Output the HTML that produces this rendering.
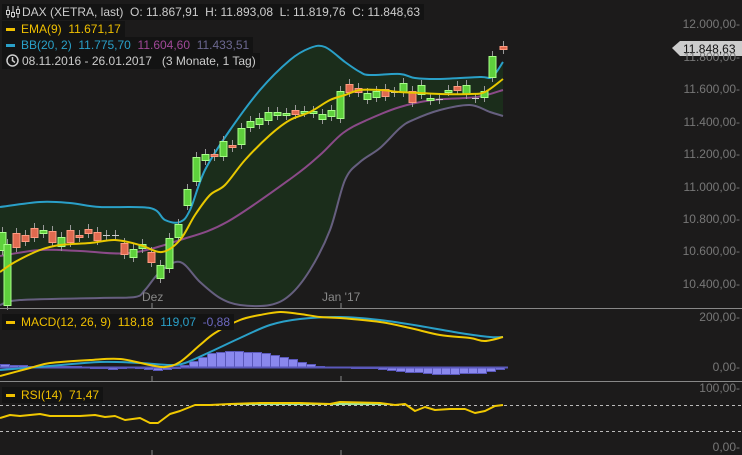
<!DOCTYPE html><html><head><meta charset="utf-8"><style>
body{margin:0;background:#1c1b1b;width:742px;height:455px;overflow:hidden;font-family:"Liberation Sans",sans-serif;}
.lg{position:absolute;left:2px;background:#131313;font-size:12px;color:#ccc;padding:0 4px;height:16px;line-height:16px;white-space:nowrap}
.ax{position:absolute;right:2px;font-size:12px;color:#777;text-align:right}
</style></head><body>
<svg width="742" height="455" style="position:absolute;left:0;top:0">
<path id="band" fill="#1b2d1b"/>
<g fill="none" stroke-width="2" stroke-linejoin="round">
<path id="ub" stroke="#2aa0c8"/>
<path id="lb" stroke="#665f7f"/>
<path id="mb" stroke="#8a4a88"/>
</g>
<g id="c" stroke-width="1"></g>
<path id="ema" fill="none" stroke="#e8c800" stroke-width="2"/>
<line x1="0" y1="308.5" x2="742" y2="308.5" stroke="#888"/>
<line x1="0" y1="381.5" x2="742" y2="381.5" stroke="#888"/>
<g stroke="#888"><line x1="152" y1="303" x2="152" y2="308"/><line x1="341" y1="303" x2="341" y2="308"/><line x1="152" y1="376" x2="152" y2="381"/><line x1="341" y1="376" x2="341" y2="381"/><line x1="152" y1="450" x2="152" y2="455"/><line x1="341" y1="450" x2="341" y2="455"/></g>
<g id="h" fill="#8a88ee" stroke="#5a58bb"></g>
<line x1="0" y1="367.5" x2="508" y2="367.5" stroke="#5a58bb" stroke-width="2"/>
<path id="sig" fill="none" stroke="#2aa0c8" stroke-width="2"/>
<path id="macd" fill="none" stroke="#f0c800" stroke-width="2"/>
<line x1="0" y1="405.5" x2="742" y2="405.5" stroke="#bbb" stroke-dasharray="3,3"/>
<line x1="0" y1="431.5" x2="742" y2="431.5" stroke="#bbb" stroke-dasharray="3,3"/>
<polygon fill="#9ce89c" points="195,405 210,405 230,404 260,403 300,403 330,404 340,402 380,403 395,405"/>
<polyline fill="none" stroke="#f0c800" stroke-width="2" stroke-linejoin="round" points="0,418 10,415 20,416 40,414 50,416 80,416 95,415 105,417 115,416 125,420 140,418 150,423 158,423 170,414 180,411 195,405 210,405 230,404 260,403 280,403 300,403 330,404 340,402 380,403 395,405 405,404 415,411 425,407 435,410 450,409 465,409 475,413 485,411 495,406 503,405"/>
<polygon fill="#ccc" points="672,48 680,41 742,41 742,56 680,56"/>
<text x="683" y="53" font-size="12" fill="#111" font-family="Liberation Sans">11.848,63</text>
<text x="142" y="301" font-size="12" fill="#888" font-family="Liberation Sans">Dez</text>
<text x="322" y="301" font-size="12" fill="#888" font-family="Liberation Sans">Jan '17</text>
</svg>
<div class="ax" style="top:17px">12.000,00-</div>
<div class="ax" style="top:50px">11.800,00-</div>
<div class="ax" style="top:82px">11.600,00-</div>
<div class="ax" style="top:115px">11.400,00-</div>
<div class="ax" style="top:147px">11.200,00-</div>
<div class="ax" style="top:180px">11.000,00-</div>
<div class="ax" style="top:212px">10.800,00-</div>
<div class="ax" style="top:244px">10.600,00-</div>
<div class="ax" style="top:277px">10.400,00-</div>
<div class="ax" style="top:310px">200,00-</div>
<div class="ax" style="top:360px">0,00-</div>
<div class="ax" style="top:381px">100,00-</div>
<div class="ax" style="top:440px">0,00-</div>
<div class="lg" style="top:4px;padding-left:20px"><svg width="14" height="12" style="position:absolute;left:4px;top:2px" stroke="#ccc" fill="none"><line x1="2" y1="0" x2="2" y2="12"/><line x1="7" y1="0" x2="7" y2="12"/><line x1="12" y1="0" x2="12" y2="12"/><rect x="0.5" y="4.5" width="3" height="4" fill="#131313"/><rect x="5.5" y="6.5" width="3" height="4" fill="#131313"/><rect x="10.5" y="3.5" width="3" height="4" fill="#131313"/></svg>DAX (XETRA, last)&nbsp; O: 11.867,91&nbsp; H: 11.893,08&nbsp; L: 11.819,76&nbsp; C: 11.848,63</div>
<div class="lg" style="top:21px;color:#f0c000"><span style="display:inline-block;width:9px;height:3px;background:#f0c000;vertical-align:middle;margin-right:6px"></span>EMA(9)&nbsp; 11.671,17</div>
<div class="lg" style="top:37px;color:#2aa0c8"><span style="display:inline-block;width:9px;height:3px;background:#2aa0c8;vertical-align:middle;margin-right:6px"></span>BB(20, 2)&nbsp; 11.775,70&nbsp; <span style="color:#a04898">11.604,60</span>&nbsp; <span style="color:#6c6890">11.433,51</span></div>
<div class="lg" style="top:53px;padding-left:20px"><svg width="13" height="13" style="position:absolute;left:4px;top:1px" fill="none" stroke="#ccc" stroke-width="1.5"><circle cx="6.5" cy="6.5" r="5.5"/><polyline points="6.5,3 6.5,6.5 9,8.5"/></svg>08.11.2016 - 26.01.2017&nbsp;&nbsp; (3 Monate, 1 Tag)</div>
<div class="lg" style="top:314px;color:#f0c000"><span style="display:inline-block;width:9px;height:3px;background:#f0c000;vertical-align:middle;margin-right:6px"></span>MACD(12, 26, 9)&nbsp; 118,18&nbsp; <span style="color:#2aa0c8">119,07</span>&nbsp; <span style="color:#6c68c0">-0,88</span></div>
<div class="lg" style="top:387px;color:#f0c000"><span style="display:inline-block;width:9px;height:3px;background:#f0c000;vertical-align:middle;margin-right:6px"></span>RSI(14)&nbsp; 71,47</div>
<script>
function cr(p,move){var d=move?'M'+p[0]+','+p[1]:'L'+p[0]+','+p[1];var n=p.length/2;
for(var i=0;i<n-1;i++){var x0=p[2*Math.max(i-1,0)],y0=p[2*Math.max(i-1,0)+1],x1=p[2*i],y1=p[2*i+1],x2=p[2*i+2],y2=p[2*i+3],j=Math.min(i+2,n-1),x3=p[2*j],y3=p[2*j+1];
d+='C'+(x1+(x2-x0)/6).toFixed(1)+','+(y1+(y2-y0)/6).toFixed(1)+' '+(x2-(x3-x1)/6).toFixed(1)+','+(y2-(y3-y1)/6).toFixed(1)+' '+x2+','+y2;}return d;}
var UB=[0,207,40,202,70,203,100,207,150,208,165,220,180,222,190,210,205,170,230,130,260,90,290,60,310,48,325,47,345,62,360,72,370,75,400,74,415,78,440,79,480,77,492,77,503,62];
var LB=[0,305,20,300,100,298,135,297,145,290,160,272,180,262,200,282,220,298,240,305,270,305,290,295,310,270,330,230,345,180,360,162,380,148,400,128,413,120,440,110,470,105,490,112,503,116];
var MB=[0,256,40,250,80,251,130,253,180,240,227,222,293,177,320,155,343,133,367,120,400,107,433,100,477,97,503,90];
var EMA=[0,272,15,262,40,250,60,245,90,243,115,240,140,245,162,252,180,240,195,215,210,195,225,185,245,160,270,135,290,120,310,112,330,100,345,95,360,90,380,90,400,92,420,93,440,94,470,94,485,92,503,79];
var SIG=[0,370,50,366,100,362,140,363,170,365,185,363,210,352,240,338,270,325,300,319,340,317,380,320,420,326,460,333,490,337,503,337];
var MAC=[0,376,30,368,50,363,90,360,120,359,150,365,165,367,180,362,200,345,215,333,240,320,260,315,280,312,300,314,320,317,340,318,380,322,410,328,440,335,470,338,485,341,503,337];
function g(i){return document.getElementById(i)}
g('ub').setAttribute('d',cr(UB,1));g('lb').setAttribute('d',cr(LB,1));g('mb').setAttribute('d',cr(MB,1));
g('ema').setAttribute('d',cr(EMA,1));g('sig').setAttribute('d',cr(SIG,1));g('macd').setAttribute('d',cr(MAC,1));
var rl=[];for(var i=LB.length-2;i>=0;i-=2)rl.push(LB[i],LB[i+1]);
g('band').setAttribute('d',cr(UB,1)+cr(rl,0)+'Z');
var C=[[2,232,250,1],[7,244,305,1],[16,233,247,0],[25,235,241,0],[34,228,237,0],[43,230,233,1],[52,231,242,0],[61,237,246,1],[70,230,242,0],[79,235,237,0],[88,229,233,0],[97,232,240,0],[106,235,235,2],[115,235,235,2],[124,243,254,0],[133,249,257,1],[142,244,248,1],[151,252,262,0],[160,265,278,1],[169,238,268,1],[178,224,237,1],[187,189,205,1],[196,157,181,1],[205,154,160,1],[214,154,156,0],[223,141,156,1],[232,145,147,0],[241,128,144,1],[250,121,127,1],[259,118,124,1],[268,112,120,1],[277,112,115,1],[286,113,115,1],[295,110,114,0],[304,111,112,1],[313,111,113,1],[322,114,119,1],[331,110,116,1],[340,91,118,1],[349,84,92,0],[358,88,92,0],[367,93,99,1],[376,91,97,1],[385,89,96,0],[394,92,92,2],[403,83,92,1],[412,91,102,0],[421,85,94,1],[430,98,100,1],[439,99,99,2],[448,90,91,1],[457,86,90,0],[466,85,94,1],[475,98,98,2],[484,91,97,1],[492,56,77,1],[503,46,49,0]];
var s='';
C.forEach(function(c){var x=c[0],t=c[1],b=c[2];
s+='<line x1="'+(x+.5)+'" y1="'+(t-5)+'" x2="'+(x+.5)+'" y2="'+(b+5)+'" stroke="#999"/>';
if(c[3]==2)s+='<line x1="'+(x-3)+'" y1="'+(t+.5)+'" x2="'+(x+4)+'" y2="'+(t+.5)+'" stroke="#ccc"/>';
else s+='<rect x="'+(x-3)+'" y="'+(t+.5)+'" width="7" height="'+Math.max(2,b-t)+'" fill="'+(c[3]?'#5ed03c':'#e06a50')+'" stroke="'+(c[3]?'#a8ff88':'#ff9a80')+'"/>';});
g('c').innerHTML=s;
var H=[[0,-3],[9,-2],[18,-2],[27,-1],[36,-1],[45,-1],[54,-1],[63,-1],[72,-1],[81,0],[90,1],[99,1],[108,2],[117,1],[126,0],[135,1],[144,2],[153,3],[162,2],[171,1],[180,-2],[189,-6],[198,-10],[207,-14],[216,-15],[225,-16],[234,-16],[243,-15],[252,-15],[261,-14],[270,-12],[279,-10],[288,-8],[297,-5],[306,-3],[315,-1],[324,0],[333,0],[342,0],[351,1],[360,1],[369,1],[378,2],[387,3],[396,4],[405,5],[414,5],[423,6],[432,7],[441,7],[450,7],[459,6],[468,6],[477,6],[486,4],[495,2]];
s='';H.forEach(function(h){var y=h[1]<0?367+h[1]:367;s+='<rect x="'+(h[0]+.5)+'" y="'+(y+.5)+'" width="9" height="'+Math.abs(h[1])+'"/>';});
g('h').innerHTML=s;
</script>
</body></html>
